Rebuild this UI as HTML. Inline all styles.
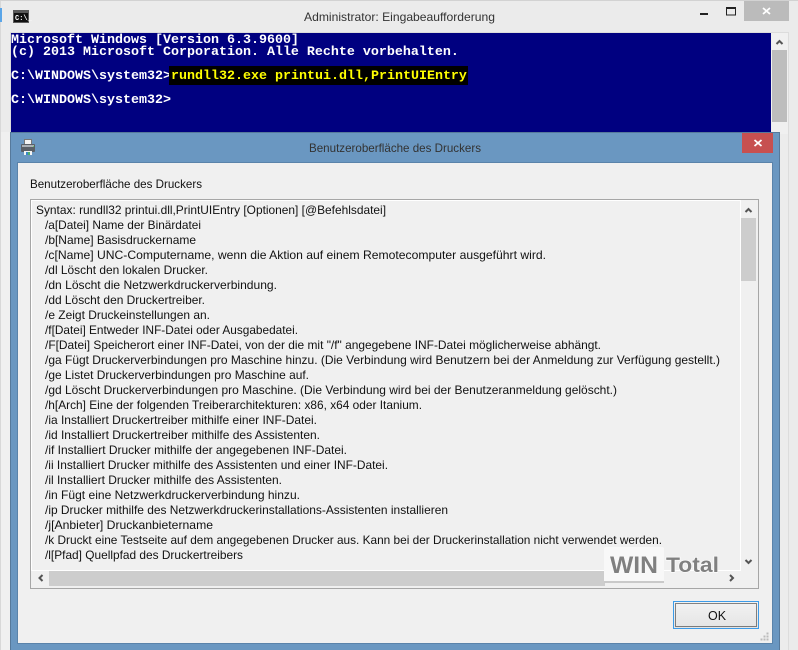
<!DOCTYPE html>
<html lang="de"><head><meta charset="utf-8"><title>Administrator: Eingabeaufforderung</title>
<style>
html,body{margin:0;padding:0;background:#ebebeb}
body{width:798px;height:650px;overflow:hidden;position:relative}
svg{position:absolute;left:0;top:0}
.u{font-family:"Liberation Sans",sans-serif;font-size:12px;fill:#111}
.m{font-family:"Liberation Mono",monospace;font-size:13.33px;font-weight:bold;fill:#fff}
</style></head><body>
<svg width="798" height="650" viewBox="0 0 798 650">
<rect width="798" height="650" fill="#ebebeb"/>
<rect x="0" y="0" width="798" height="1" fill="#d2d2d2"/>
<rect x="0" y="1" width="1" height="649" fill="#d8d8d8"/>
<rect x="0" y="8" width="2" height="14" fill="#5aa5e8"/>
<!-- cmd icon -->
<rect x="13" y="10" width="16" height="13" fill="#5a5a5a"/>
<rect x="14" y="13" width="14" height="9" fill="#111"/>
<text x="15" y="20" font-family="Liberation Mono,monospace" font-size="7" font-weight="bold" fill="#fff">C:\_</text>
<!-- cmd title -->
<text x="304" y="21" font-family="Liberation Sans,sans-serif" font-size="12" fill="#333" textLength="191" lengthAdjust="spacingAndGlyphs">Administrator: Eingabeaufforderung</text>
<!-- window buttons -->
<rect x="700" y="13" width="8" height="2" fill="#222"/>
<rect x="726.500" y="8" width="9" height="7" fill="none" stroke="#222" stroke-width="1"/>
<rect x="726" y="7" width="10" height="2" fill="#222"/>
<rect x="744" y="1" width="45" height="20" fill="#bbb"/>
<path d="M763 8l7 6M770 8l-7 6" stroke="#fff" stroke-width="1.800" fill="none"/>
<!-- cmd client -->
<rect x="10" y="32" width="779" height="618" fill="#dcdcdc"/>
<rect x="11" y="33" width="760" height="120" fill="#000080"/>
<rect x="771" y="33" width="17" height="617" fill="#f0f0f0"/>
<rect x="772" y="50" width="15" height="72" fill="#bdbdbd"/>
<path d="M776.500 44l3-3 3 3" stroke="#555" stroke-width="2" fill="none"/>
<rect x="0" y="132" width="10" height="518" fill="#f0f0f0"/>
<rect x="0" y="132" width="1" height="518" fill="#d8d8d8"/>
<text class="m" x="11" y="43">Microsoft Windows [Version 6.3.9600]</text>
<text class="m" x="11" y="55">(c) 2013 Microsoft Corporation. Alle Rechte vorbehalten.</text>
<text class="m" x="11" y="79">C:\WINDOWS\system32&gt;</text>
<rect x="169" y="66" width="299" height="19" fill="#000"/>
<text class="m" x="171" y="79" style="fill:#ffff00">rundll32.exe printui.dll,PrintUIEntry</text>
<text class="m" x="11" y="103">C:\WINDOWS\system32&gt;</text>
<!-- dialog frame -->
<rect x="780" y="134" width="8" height="516" fill="#ececec"/>
<rect x="10" y="132" width="770" height="518" fill="#6a97c1"/>
<rect x="10" y="132" width="770" height="1" fill="#56799b"/>
<rect x="10" y="132" width="1" height="518" fill="#56799b"/>
<rect x="779" y="132" width="1" height="518" fill="#56799b"/>
<rect x="17" y="162" width="756" height="482" fill="#5a83aa"/>
<rect x="18" y="163" width="754" height="480" fill="#f0f0f0"/>
<rect x="742" y="133" width="31" height="20" fill="#c75050"/>
<path d="M754.500 140l7 6M761.500 140l-7 6" stroke="#fff" stroke-width="1.800" fill="none"/>
<!-- printer icon -->
<rect x="24.500" y="139.500" width="7" height="5" fill="#f4f4f4" stroke="#777"/>
<rect x="21" y="144" width="14" height="8" rx="1" fill="#5a5f66"/>
<rect x="22" y="145" width="12" height="2" fill="#aab0b6"/>
<rect x="33" y="146" width="1" height="1" fill="#5fcf5f"/>
<rect x="24" y="151" width="8" height="4" fill="#f4f4f4"/>
<rect x="26" y="152" width="2" height="3" fill="#3b86c8"/>
<rect x="28" y="152" width="2" height="3" fill="#4caf6a"/>
<text x="309" y="152" font-family="Liberation Sans,sans-serif" font-size="12" fill="#333" textLength="172" lengthAdjust="spacingAndGlyphs">Benutzeroberfläche des Druckers</text>
<text class="u" x="30" y="188" textLength="172" lengthAdjust="spacingAndGlyphs">Benutzeroberfläche des Druckers</text>
<!-- list box -->
<rect x="30.500" y="199.500" width="728" height="389" fill="#f0f0f0" stroke="#a6a6a6"/>
<rect x="31.500" y="200.500" width="709" height="370" fill="#f0f0f0" stroke="#fff" stroke-width="1"/>
<rect x="741" y="218" width="15" height="63" fill="#cdcdcd"/>
<path d="M745.500 212l3-3 3 3" stroke="#555" stroke-width="2" fill="none"/>
<path d="M745.500 560l3 3 3-3" stroke="#555" stroke-width="2" fill="none"/>
<rect x="49" y="571" width="556" height="15" fill="#cdcdcd"/>
<path d="M42.500 575l-3 3 3 3" stroke="#555" stroke-width="2" fill="none"/>
<path d="M730 575l3 3-3 3" stroke="#555" stroke-width="2" fill="none"/>
<!-- list text -->
<g>
<text class="u" x="36" y="214" textLength="350" lengthAdjust="spacingAndGlyphs">Syntax: rundll32 printui.dll,PrintUIEntry [Optionen] [@Befehlsdatei]</text>
<text class="u" x="45" y="229" textLength="156" lengthAdjust="spacingAndGlyphs">/a[Datei] Name der Binärdatei</text>
<text class="u" x="45" y="244" textLength="151" lengthAdjust="spacingAndGlyphs">/b[Name] Basisdruckername</text>
<text class="u" x="45" y="259" textLength="501" lengthAdjust="spacingAndGlyphs">/c[Name] UNC-Computername, wenn die Aktion auf einem Remotecomputer ausgeführt wird.</text>
<text class="u" x="45" y="274" textLength="163" lengthAdjust="spacingAndGlyphs">/dl Löscht den lokalen Drucker.</text>
<text class="u" x="45" y="289" textLength="232" lengthAdjust="spacingAndGlyphs">/dn Löscht die Netzwerkdruckerverbindung.</text>
<text class="u" x="45" y="304" textLength="160" lengthAdjust="spacingAndGlyphs">/dd Löscht den Druckertreiber.</text>
<text class="u" x="45" y="319" textLength="165" lengthAdjust="spacingAndGlyphs">/e Zeigt Druckeinstellungen an.</text>
<text class="u" x="45" y="334" textLength="253" lengthAdjust="spacingAndGlyphs">/f[Datei] Entweder INF-Datei oder Ausgabedatei.</text>
<text class="u" x="45" y="349" textLength="556" lengthAdjust="spacingAndGlyphs">/F[Datei] Speicherort einer INF-Datei, von der die mit "/f" angegebene INF-Datei möglicherweise abhängt.</text>
<text class="u" x="45" y="364" textLength="675" lengthAdjust="spacingAndGlyphs">/ga Fügt Druckerverbindungen pro Maschine hinzu. (Die Verbindung wird Benutzern bei der Anmeldung zur Verfügung gestellt.)</text>
<text class="u" x="45" y="379" textLength="264" lengthAdjust="spacingAndGlyphs">/ge Listet Druckerverbindungen pro Maschine auf.</text>
<text class="u" x="45" y="394" textLength="572" lengthAdjust="spacingAndGlyphs">/gd Löscht Druckerverbindungen pro Maschine. (Die Verbindung wird bei der Benutzeranmeldung gelöscht.)</text>
<text class="u" x="45" y="409" textLength="377" lengthAdjust="spacingAndGlyphs">/h[Arch] Eine der folgenden Treiberarchitekturen: x86, x64 oder Itanium.</text>
<text class="u" x="45" y="424" textLength="272" lengthAdjust="spacingAndGlyphs">/ia Installiert Druckertreiber mithilfe einer INF-Datei.</text>
<text class="u" x="45" y="439" textLength="275" lengthAdjust="spacingAndGlyphs">/id Installiert Druckertreiber mithilfe des Assistenten.</text>
<text class="u" x="45" y="454" textLength="302" lengthAdjust="spacingAndGlyphs">/if Installiert Drucker mithilfe der angegebenen INF-Datei.</text>
<text class="u" x="45" y="469" textLength="343" lengthAdjust="spacingAndGlyphs">/ii Installiert Drucker mithilfe des Assistenten und einer INF-Datei.</text>
<text class="u" x="45" y="484" textLength="237" lengthAdjust="spacingAndGlyphs">/il Installiert Drucker mithilfe des Assistenten.</text>
<text class="u" x="45" y="499" textLength="255" lengthAdjust="spacingAndGlyphs">/in Fügt eine Netzwerkdruckerverbindung hinzu.</text>
<text class="u" x="45" y="514" textLength="403" lengthAdjust="spacingAndGlyphs">/ip Drucker mithilfe des Netzwerkdruckerinstallations-Assistenten installieren</text>
<text class="u" x="45" y="529" textLength="168" lengthAdjust="spacingAndGlyphs">/j[Anbieter] Druckanbietername</text>
<text class="u" x="45" y="544" textLength="617" lengthAdjust="spacingAndGlyphs">/k Druckt eine Testseite auf dem angegebenen Drucker aus. Kann bei der Druckerinstallation nicht verwendet werden.</text>
<text class="u" x="45" y="559" textLength="198" lengthAdjust="spacingAndGlyphs">/l[Pfad] Quellpfad des Druckertreibers</text>
</g>
<!-- OK button -->
<defs><linearGradient id="g" x1="0" y1="0" x2="0" y2="1"><stop offset="0" stop-color="#f3f3f3"/><stop offset="1" stop-color="#e4e4e4"/></linearGradient></defs>
<rect x="673.500" y="601.500" width="85" height="27" fill="url(#g)" stroke="#3c9be8"/>
<rect x="675.500" y="603.500" width="81" height="23" fill="none" stroke="#111" stroke-dasharray="1 1"/>
<text x="708" y="620" font-family="Liberation Sans,sans-serif" font-size="12.500" fill="#111">OK</text>
<path d="M767 639h1v1h-1zM764 639h1v1h-1zM761 639h1v1h-1zM767 636h1v1h-1zM764 636h1v1h-1zM767 633h1v1h-1z" fill="#999" stroke="#bbb" stroke-width="1"/>
<!-- watermark -->
<rect x="604" y="547" width="60" height="36" rx="2" fill="#f8f8f8"/>
<rect x="604" y="581" width="60" height="2" fill="#c9c9c9"/>
<text x="610" y="573" font-family="Liberation Sans,sans-serif" font-size="24" font-weight="bold" fill="#808080" stroke="#fff" stroke-width=".6" paint-order="stroke" textLength="48" lengthAdjust="spacingAndGlyphs">WIN</text>
<text x="666" y="572" font-family="Liberation Sans,sans-serif" font-size="21" font-weight="bold" fill="#808080" stroke="#fff" stroke-width="1.200" paint-order="stroke" textLength="53" lengthAdjust="spacingAndGlyphs">Total</text>
</svg>
</body></html>
